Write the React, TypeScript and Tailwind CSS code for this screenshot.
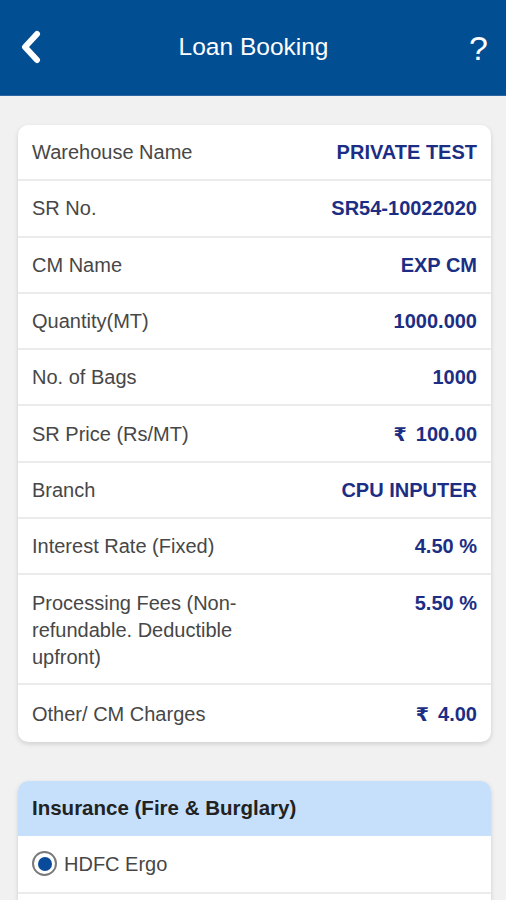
import React from "react";

const rows: { label: string; value: string; tall?: boolean; rupee?: boolean }[] = [
  { label: "Warehouse Name", value: "PRIVATE TEST" },
  { label: "SR No.", value: "SR54-10022020" },
  { label: "CM Name", value: "EXP CM" },
  { label: "Quantity(MT)", value: "1000.000" },
  { label: "No. of Bags", value: "1000" },
  { label: "SR Price (Rs/MT)", value: "100.00", rupee: true },
  { label: "Branch", value: "CPU INPUTER" },
  { label: "Interest Rate (Fixed)", value: "4.50 %" },
  { label: "Processing Fees (Non-refundable. Deductible upfront)", value: "5.50 %", tall: true },
  { label: "Other/ CM Charges", value: "4.00", rupee: true },
];

export default function App() {
  return (
    <div
      className="w-[506px] h-[900px] overflow-hidden bg-[#f1f1f1]"
      style={{ fontFamily: '"Liberation Sans", Arial, sans-serif' }}
    >
      <header className="h-[96px] bg-[#024e93] border-b border-[#2d66a3] flex items-center justify-between pl-[18px] pr-[18px]">
        <svg width="26" height="34" viewBox="0 0 26 34" className="mb-[2px]">
          <path d="M19 4 L7 17 L19 30" fill="none" stroke="#fff" strokeWidth="6" strokeLinecap="round" strokeLinejoin="round" />
        </svg>
        <h1 className="text-white text-[24.5px] leading-none mr-[6px]">Loan Booking</h1>
        <span className="text-white text-[34px] leading-none">?</span>
      </header>

      <div className="ml-[18px] mr-[15px] mt-[29px] bg-white rounded-[10px] shadow-[0_2px_5px_rgba(0,0,0,0.14)] overflow-hidden">
        {rows.map((r, i) => (
          <div
            key={r.label}
            className={
              "flex justify-between px-[14px] " +
              (r.tall ? "items-start pt-[15px] pb-[12px] " : "items-center h-[56.3px] ") +
              (i < rows.length - 1 ? "border-b-2 border-[#ebebeb]" : "")
            }
          >
            <span className={"text-[20px] text-[#474747] " + (r.tall ? "w-[240px] leading-[27px]" : "leading-none")}>
              {r.label}
            </span>
            <span className={"text-[20px] font-bold text-[#1c2e84] " + (r.tall ? "leading-[27px]" : "leading-none")}>
              {r.rupee ? (
                <>
                  <span style={{ fontFamily: '"DejaVu Sans", "Noto Sans", sans-serif' }} className="text-[19px] mr-[9px]">₹</span>
                  {r.value}
                </>
              ) : (
                r.value
              )}
            </span>
          </div>
        ))}
      </div>

      <div className="ml-[18px] mr-[15px] mt-[39px] bg-white rounded-[10px] shadow-[0_2px_5px_rgba(0,0,0,0.14)] overflow-hidden">
        <div className="h-[55px] bg-[#c6e0fb] flex items-center px-[14px]">
          <span className="text-[20.5px] font-bold text-[#222]">Insurance (Fire &amp; Burglary)</span>
        </div>
        <div className="h-[58px] flex items-center px-[14px] border-b-2 border-[#ebebeb]">
          <span className="w-[25px] h-[25px] rounded-full border-[2.5px] border-[#7a7a7a] flex items-center justify-center">
            <span className="w-[14px] h-[14px] rounded-full bg-[#0a4a9a]" />
          </span>
          <span className="ml-[7px] text-[20px] text-[#474747]">HDFC Ergo</span>
        </div>
        <div className="h-[58px]" />
      </div>
    </div>
  );
}
